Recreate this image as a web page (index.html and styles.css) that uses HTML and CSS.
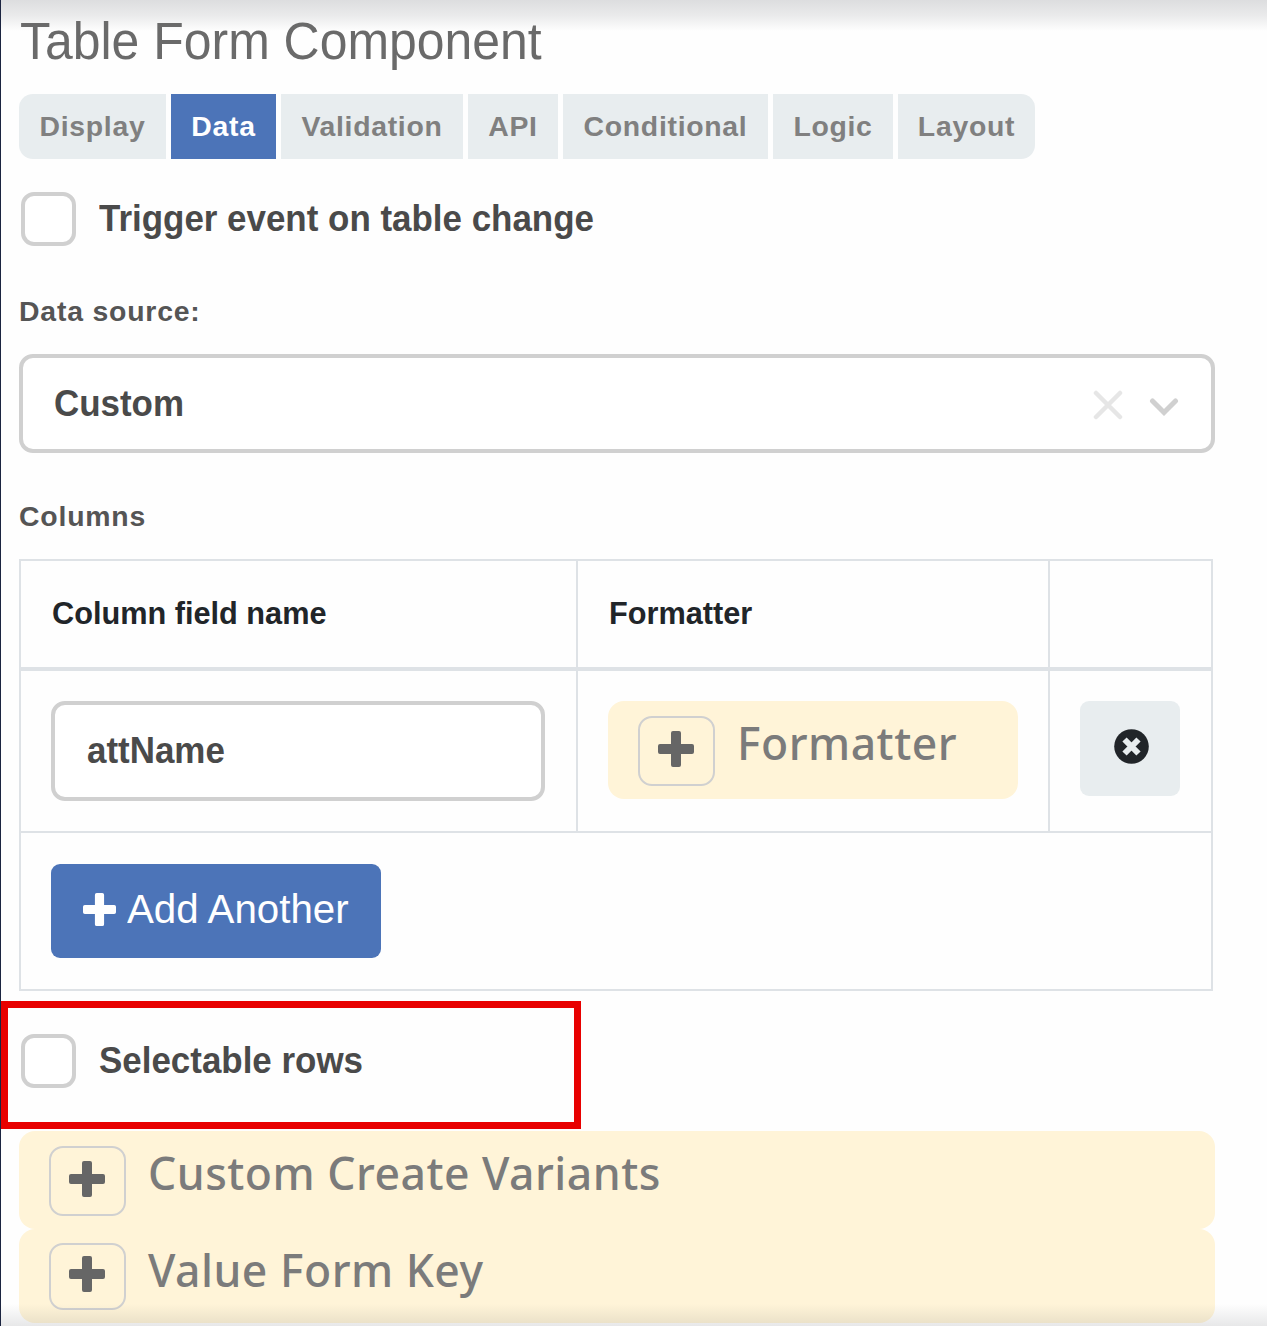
FILE: index.html
```html
<!DOCTYPE html>
<html lang="en">
<head>
<meta charset="utf-8">
<title>Table Form Component</title>
<link rel="stylesheet" href="styles.css">
</head>
<body>
<svg class="defs" width="0" height="0" aria-hidden="true">
  <symbol id="plus" viewBox="0 0 36 36"><path d="M15 0h6q2 0 2 2v11h11q2 0 2 2v6q0 2-2 2H23v11q0 2-2 2h-6q-2 0-2-2V23H2q-2 0-2-2v-6q0-2 2-2h11V2q0-2 2-2z"/></symbol>
</svg>
<main class="page">
  <h1 class="title"><span>Table Form Component</span></h1>
  <nav class="tabs">
    <a class="tab">Display</a><a class="tab active">Data</a><a class="tab">Validation</a><a class="tab">API</a><a class="tab">Conditional</a><a class="tab">Logic</a><a class="tab">Layout</a>
  </nav>
  <label class="check trigger"><i class="box"></i><span class="strong">Trigger event on table change</span></label>
  <div class="label source-label">Data source:</div>
  <div class="select">
    <span class="strong">Custom</span>
    <svg class="clear" width="30" height="30" viewBox="0 0 30 30"><path d="M3 3l24 24M27 3l-24 24"/></svg>
    <svg class="chevron" width="30" height="20" viewBox="0 0 30 20"><path d="M3.500 4l11.500 11.500 11.500-11.500"/></svg>
  </div>
  <div class="label columns-label">Columns</div>
  <section class="table">
    <div class="row head">
      <div class="cell">Column field name</div><div class="cell">Formatter</div><div class="cell"></div>
    </div>
    <div class="row body">
      <div class="cell"><div class="input"><span class="strong">attName</span></div></div>
      <div class="cell"><div class="panel"><span class="toggle"><svg width="36" height="36"><use href="#plus"/></svg></span><span class="panel-title">Formatter</span></div></div>
      <div class="cell"><button class="remove"><svg width="35" height="35" viewBox="0 0 35 35"><circle cx="17.500" cy="17.500" r="17.300"/><path d="M10.500 10.500l14 14M24.500 10.500l-14 14"/></svg></button></div>
    </div>
    <div class="foot"><button class="add"><svg width="33" height="33"><use href="#plus"/></svg><span>Add Another</span></button></div>
  </section>
  <div class="highlight"><label class="check"><i class="box"></i><span class="strong">Selectable rows</span></label></div>
  <div class="panel wide"><span class="toggle"><svg width="36" height="36"><use href="#plus"/></svg></span><span class="panel-title">Custom Create Variants</span></div>
  <div class="panel wide last"><span class="toggle"><svg width="36" height="36"><use href="#plus"/></svg></span><span class="panel-title">Value Form Key</span></div>
</main>
</body>
</html>
```
FILE: styles.css
```css
* { box-sizing: border-box; }
body { margin: 0; background: #fefefe; font-family: "Liberation Sans", Arial, sans-serif; color: #4a4a4a; }
.defs { display: block; height: 0; }
.page { position: relative; height: 1326px; overflow: hidden; border-left: 1px solid #1b2440; padding-left: 18px; }
.page::before, .page::after { content: ""; position: absolute; left: 0; right: 0; pointer-events: none; }
.page::before { top: 0; height: 31px; background: linear-gradient(rgba(30, 35, 45, .15), rgba(30, 35, 45, .09) 50%, rgba(30, 35, 45, 0)); }
.page::after { bottom: 0; height: 22px; background: linear-gradient(rgba(30, 35, 45, 0), rgba(30, 35, 45, .1)); }

.title { margin: 0; height: 94px; padding-left: 1px; font-weight: 400; font-size: 51px; line-height: 84px; color: #6a6a6a; white-space: nowrap; }
.title span { display: inline-block; transform: scaleX(.979); transform-origin: left; }

.tabs { display: grid; grid-template-columns: 147px 105px 182px 90px 205px 120px 137px; gap: 5px; height: 65px; }
.tab { background: #e8edef; color: #808080; font-weight: 700; font-size: 28.4px; letter-spacing: .7px; line-height: 64px; text-align: center; }
.tab:first-child { border-radius: 14px 0 0 14px; }
.tab:last-child { border-radius: 0 14px 14px 0; }
.tab.active { background: #4c74b8; color: #fff; }

.strong { display: inline-block; font-weight: 700; font-size: 37px; line-height: 54px; white-space: nowrap; transform: scaleX(.944); transform-origin: left; }
.check { display: flex; align-items: flex-start; gap: 23px; }
.box { width: 55px; height: 54px; border: 4px solid #d0d0d0; border-radius: 13px; background: #fff; }
.trigger { margin: 33px 0 0 2px; }

.label { height: 36px; font-weight: 700; font-size: 28.4px; letter-spacing: .8px; line-height: 34px; color: #555; }
.source-label { margin-top: 48px; }
.columns-label { margin-top: 46px; }
.select { margin-top: 24px; width: 1196px; height: 99px; border: 4px solid #d0d0d0; border-radius: 14px; background: #fff; padding: 0 32px 0 31px; display: flex; align-items: center; }
.select svg { fill: none; stroke-linecap: round; }
.clear { margin-left: auto; margin-top: 2px; stroke: #e6e6e6; stroke-width: 4.500; }
.chevron { margin-left: 26px; margin-top: 6px; stroke: #d0d0d0; stroke-width: 5; }

.table { margin-top: 24px; width: 1194px; height: 432px; border: 2px solid #dee2e6; }
.row { display: grid; grid-template-columns: 557px 472px 161px; }
.cell { padding: 30px; border-right: 2px solid #dee2e6; }
.cell:last-child { border-right: 0; }
.head { height: 110px; border-bottom: 4px solid #dee2e6; }
.head .cell { padding: 0 31px; font-weight: 700; font-size: 30.7px; line-height: 105px; color: #212529; }
.body { height: 162px; border-bottom: 2px solid #dee2e6; }
.input { width: 494px; height: 100px; border: 4px solid #d0d0d0; border-radius: 14px; background: #fff; padding: 19px 32px; }

.panel { display: flex; align-items: flex-start; width: 410px; height: 98px; border-radius: 16px; background: #fff4d8; padding: 15px 30px; gap: 22px; }
.toggle { flex: none; width: 77px; height: 70px; border: 2px solid #d0d0d0; border-radius: 14px; display: grid; justify-content: center; padding: 13px 1px 0 0; fill: #666; }
.panel-title { font-family: "Noto Sans", "Open Sans", sans-serif; font-weight: 500; font-size: 44.5px; letter-spacing: .5px; line-height: 54px; color: #7b7b7b; white-space: nowrap; }
.wide { width: 1196px; margin-top: 2px; }
.last { height: 94px; margin-top: 0; padding-top: 14px; }
.last .toggle { height: 67px; padding-top: 11px; }

button { border: 0; padding: 0; margin: 0; font: inherit; }
.remove { width: 100px; height: 95px; border-radius: 9px; background: #e8edef; display: grid; place-content: center; padding-bottom: 4px; padding-left: 2px; }
.remove circle { fill: #212529; }
.remove path { stroke: #e8edef; stroke-width: 6; }
.foot { padding: 31px 30px; }
.add { width: 330px; height: 94px; border-radius: 9px; background: #4c74b8; color: #fff; fill: #fff; display: flex; align-items: center; padding: 0 0 4px 32px; gap: 11px; font-size: 41px; white-space: nowrap; }
.add span { transform: scaleX(.982); transform-origin: left; }

.highlight { margin: 10px 0 0 -18px; width: 580px; height: 128px; border: 7px solid #e80000; padding: 26px 0 0 13px; }
```
